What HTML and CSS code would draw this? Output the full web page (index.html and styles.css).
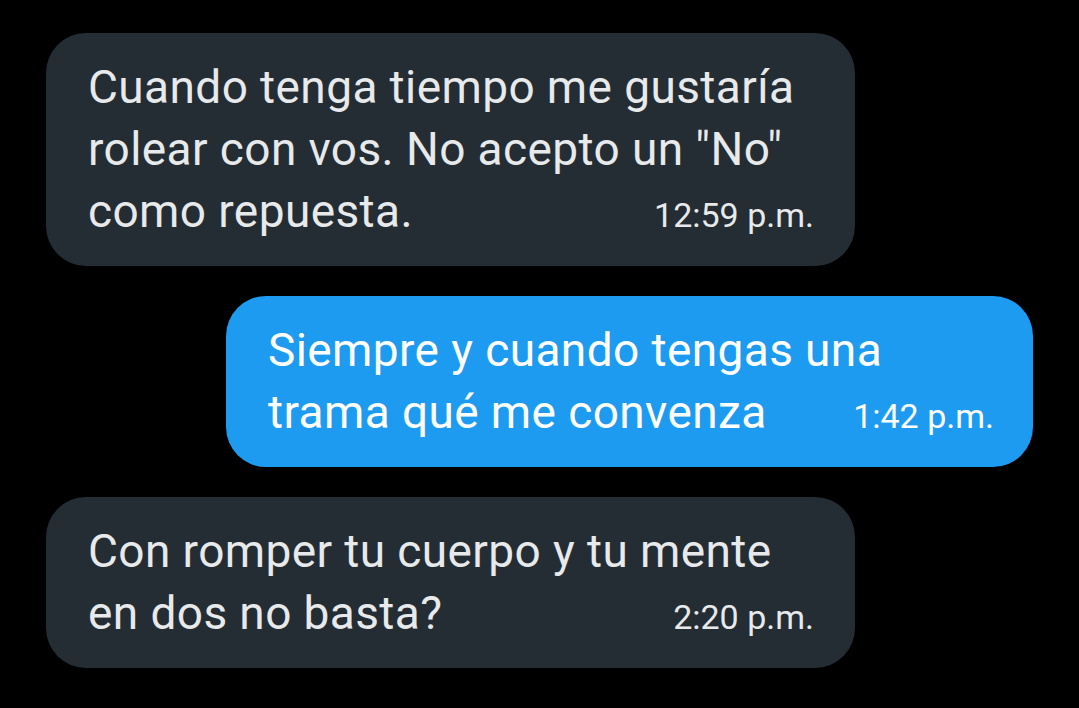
FILE: index.html
```html
<!DOCTYPE html>
<html lang="es">
<head>
<meta charset="utf-8">
<link rel="stylesheet" href="styles.css">
</head>
<body>
<main class="chat">
  <div class="bubble received">
    <div class="line">Cuando tenga tiempo me gustaría</div>
    <div class="line">rolear con vos. No acepto un "No"</div>
    <div class="line last"><span>como repuesta.</span><span class="time">12:59 p.m.</span></div>
  </div>
  <div class="bubble sent">
    <div class="line">Siempre y cuando tengas una</div>
    <div class="line last"><span>trama qué me convenza</span><span class="time">1:42 p.m.</span></div>
  </div>
  <div class="bubble received">
    <div class="line">Con romper tu cuerpo y tu mente</div>
    <div class="line last"><span>en dos no basta?</span><span class="time">2:20 p.m.</span></div>
  </div>
</main>
</body>
</html>
```
FILE: styles.css
```css
html, body {
  margin: 0;
  background: #000;
}
body {
  font-family: Roboto, "Liberation Sans", sans-serif;
  width: 1079px;
  height: 708px;
  overflow: hidden;
}
.chat {
  display: flex;
  flex-direction: column;
  gap: 30px;
  padding: 33px 46px 0 46px;
}
.bubble {
  box-sizing: border-box;
  width: 809px;
  border-radius: 40px;
  padding: 23px 41px 24px 42px;
}
.received {
  background: #242c34;
  color: #e7e9ea;
  align-self: flex-start;
}
.sent {
  background: #1d9bf0;
  color: #fff;
  align-self: flex-end;
  width: 807px;
  padding-right: 39px;
}
.line {
  font-size: 46px;
  line-height: 62px;
  height: 62px;
  letter-spacing: 0.4px;
  white-space: nowrap;
}
.last {
  display: flex;
  justify-content: space-between;
  align-items: baseline;
}
.time {
  font-size: 34px;
  line-height: 1;
  letter-spacing: 0;
}
```
